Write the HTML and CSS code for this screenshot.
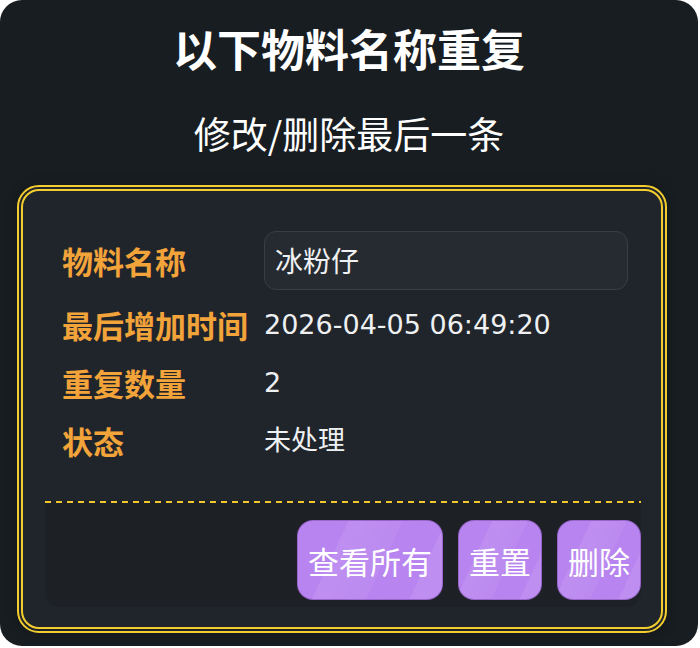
FILE: index.html
```html
<!DOCTYPE html>
<html>
	<head>
		<meta charset="utf-8">
		<title>物料名称重复</title>
		<link rel="stylesheet" href="styles.css">
	</head>
	<body>
		<div class="panel">
			<h1 class="title">以下物料名称重复</h1>
			<p class="subtitle">修改/删除最后一条</p>
			<div class="card">
				<div class="form">
					<div class="label">物料名称</div>
					<div class="input">冰粉仔</div>
					<div class="label">最后增加时间</div>
					<div class="value">2026-04-05 06:49:20</div>
					<div class="label">重复数量</div>
					<div class="value">2</div>
					<div class="label">状态</div>
					<div class="value">未处理</div>
				</div>
				<div class="footer">
					<button class="btn">查看所有</button>
					<button class="btn">重置</button>
					<button class="btn">删除</button>
				</div>
			</div>
		</div>
	</body>
</html>
```

FILE: styles.css
```css
*{
	margin: 0;
	padding: 0;
	box-sizing: border-box;
}
body{
	background-color: #fff;
	font-family: "Noto Sans CJK SC", sans-serif;
}
.panel{
	width: 698px;
	height: 646px;
	padding-top: 20px;
	background-color: #181d21;
	border-radius: 22px;
	color: #fff;
}
.title{
	font-size: 44px;
	font-weight: 700;
	line-height: 56px;
	text-align: center;
}
.subtitle{
	margin-top: 32px;
	font-size: 37px;
	font-weight: 400;
	line-height: 50px;
	text-align: center;
}
.card{
	width: 650px;
	margin: 27px 0 0 17px;
	padding: 40px 20px 20px 22px;
	background-color: #20252b;
	border: 6px double #f3cd2e;
	border-radius: 22px;
	box-shadow: 0 0 12px rgba(0, 0, 0, 0.25);
}
.form{
	display: grid;
	grid-template-columns: 202px 1fr;
	grid-template-rows: 59px 64px 58px 58px;
	padding: 0 13px 0 17px;
	align-items: end;
}
.label{
	height: 58px;
	line-height: 58px;
	color: #f2a33a;
	font-size: 31px;
	font-weight: 700;
}
.value{
	height: 58px;
	line-height: 58px;
	font-family: "DejaVu Sans", "Noto Sans CJK SC", sans-serif;
	font-size: 27px;
	color: #eef0f2;
}
.form .label:first-child{
	height: 59px;
	line-height: 59px;
}
.input{
	height: 59px;
	padding-left: 10px;
	line-height: 57px;
	font-size: 28px;
	color: #eef0f2;
	background-color: #262b31;
	border: 1px solid #383e46;
	border-radius: 12px;
}
.footer{
	display: flex;
	justify-content: flex-end;
	gap: 15px;
	margin-top: 31px;
	padding: 19px 0 7px;
	background-color: #1d2126;
	background-image: repeating-linear-gradient(90deg, #f0c72c 0, #f0c72c 6px, transparent 6px, transparent 11px);
	background-size: 100% 2px;
	background-repeat: no-repeat;
	border-radius: 0 0 14px 14px;
}
.btn{
	height: 80px;
	padding: 0 10px;
	font-family: "Noto Sans CJK SC", sans-serif;
	font-size: 31px;
	color: #fff;
	border: 1px solid rgba(110, 60, 160, 0.45);
	border-radius: 16px;
	background-color: #b884ef;
	background-image: linear-gradient(115deg, rgba(255,255,255,0) 28%, rgba(255,255,255,0.09) 28%, rgba(255,255,255,0.05) 58%, rgba(255,255,255,0) 58%, rgba(255,255,255,0) 82%, rgba(255,255,255,0.09) 82%);
}
```
